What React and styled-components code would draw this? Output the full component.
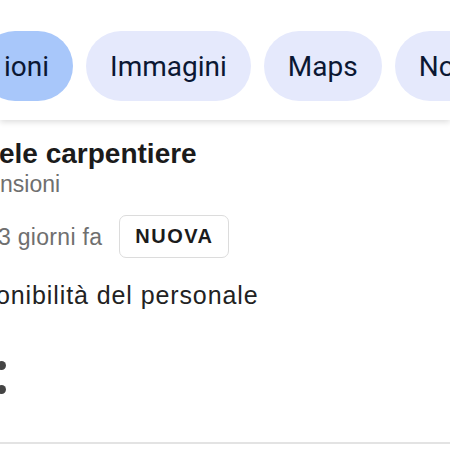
import styled, { createGlobalStyle } from "styled-components";

const GlobalStyle = createGlobalStyle`
  html, body {
    margin: 0;
    padding: 0;
    background: #ffffff;
  }
  body {
    width: 450px;
    height: 450px;
    overflow: hidden;
    font-family: "Liberation Sans", Arial, sans-serif;
  }
`;

const Header = styled.header`
  position: relative;
  z-index: 1;
  height: 120px;
  box-sizing: border-box;
  padding-top: 31px;
  background: #ffffff;
  box-shadow: 0 2px 6px rgba(0, 0, 0, 0.14);
  overflow: hidden;
`;

const ChipRow = styled.nav`
  display: flex;
  gap: 13px;
  margin-left: -20px;
  white-space: nowrap;
`;

const Chip = styled.div`
  flex: none;
  display: flex;
  align-items: center;
  height: 70px;
  padding: 0 24px;
  border-radius: 35px;
  background: ${(p) => (p.$active ? "#a8c7fa" : "#e5e9fc")};
  color: #0b1733;
  font-family: Roboto, "Noto Sans", sans-serif;
  font-size: 28px;
`;

const Listing = styled.main`
  display: flex;
  flex-direction: column;
  align-items: flex-start;
  overflow: hidden;
`;

const Title = styled.h2`
  margin: 18px 0 0 -1px;
  font-size: 28px;
  line-height: 32px;
  font-weight: 700;
  color: #1b1b1b;
`;

const Company = styled.div`
  font-size: 23px;
  line-height: 28px;
  color: #6f6f6f;
`;

const MetaRow = styled.div`
  display: flex;
  align-items: center;
  gap: 17px;
  margin: 17px 0 0 -2px;
`;

const Posted = styled.span`
  font-size: 23px;
  line-height: 28px;
  letter-spacing: 0.3px;
  color: #6f6f6f;
`;

const Badge = styled.span`
  display: flex;
  align-items: center;
  height: 43px;
  box-sizing: border-box;
  padding: 0 14px 0 15px;
  border: 1.5px solid #dcdcdc;
  border-radius: 7px;
  font-size: 20px;
  font-weight: 700;
  letter-spacing: 1.5px;
  color: #1b1b1b;
`;

const Benefit = styled.div`
  margin: 22px 0 0 -4px;
  font-size: 25px;
  line-height: 30px;
  letter-spacing: 0.9px;
  color: #222222;
`;

const Dots = styled.div`
  display: flex;
  flex-direction: column;
  gap: 15px;
  margin: 51px 0 0 -3px;
`;

const Dot = styled.span`
  width: 9px;
  height: 9px;
  border-radius: 50%;
  background: #444444;
`;

const Divider = styled.hr`
  align-self: stretch;
  margin: 48px 0 0;
  border: none;
  border-top: 2px solid #e3e3e3;
`;

export default function App() {
  return (
    <>
      <GlobalStyle />
      <Header>
        <ChipRow>
          <Chip $active>ioni</Chip>
          <Chip>Immagini</Chip>
          <Chip>Maps</Chip>
          <Chip>Notizie</Chip>
        </ChipRow>
      </Header>
      <Listing>
        <Title>ele carpentiere</Title>
        <Company>nsioni</Company>
        <MetaRow>
          <Posted>3 giorni fa</Posted>
          <Badge>NUOVA</Badge>
        </MetaRow>
        <Benefit>onibilità del personale</Benefit>
        <Dots>
          <Dot />
          <Dot />
        </Dots>
        <Divider />
      </Listing>
    </>
  );
}
